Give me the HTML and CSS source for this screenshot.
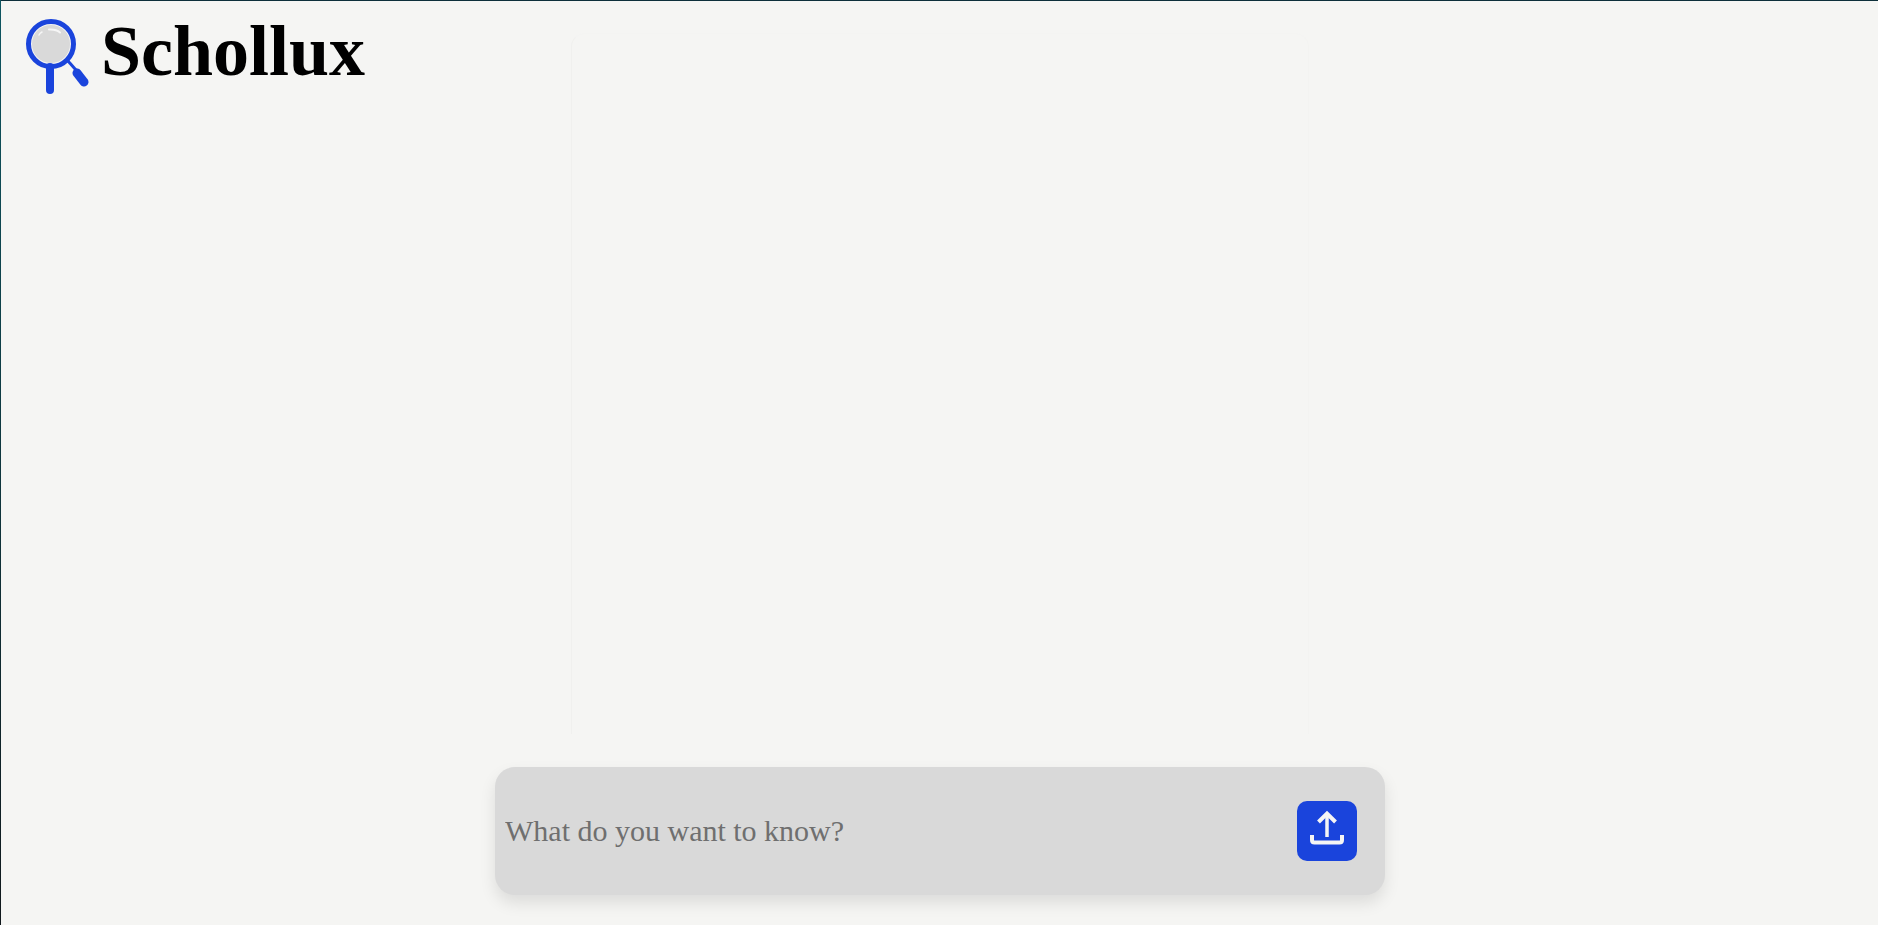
FILE: index.html
```html
<!DOCTYPE html>
<html lang="en">
<head>
<meta charset="UTF-8">
<title>Schollux</title>
<link rel="stylesheet" href="styles.css">
</head>
<body>
<div class="app">
  <header class="marca">
    <svg class="lupa" width="66" height="78" viewBox="0 0 66 78">
      <circle cx="27" cy="27" r="19.500" fill="#d9d9d9" stroke="#f4f4f4" stroke-width="1"/>
      <circle cx="27" cy="27" r="22.500" fill="none" stroke="#1a44dc" stroke-width="5"/>
      <path d="M25 12.500q7-.5 11 3" fill="none" stroke="#f6f6f6" stroke-width="2" stroke-linecap="round"/>
      <path d="M15 18q1-2 3-3" fill="none" stroke="#f6f6f6" stroke-width="1.500" stroke-linecap="round"/>
      <path d="M26 50v23" stroke="#1a44dc" stroke-width="8" stroke-linecap="round"/>
      <path d="M44 44l8 9" stroke="#1a44dc" stroke-width="3"/>
      <path d="M53 56l7 9" stroke="#1a44dc" stroke-width="9" stroke-linecap="round"/>
    </svg>
    <h1 class="nombre">Schollux</h1>
  </header>

  <main class="panel"></main>

  <form class="buscador">
    <input class="campo" type="text" placeholder="What do you want to know?">
    <button class="enviar" type="button" aria-label="Send">
      <svg width="60" height="60" viewBox="0 0 60 60" fill="none" stroke="#f5f5f5" stroke-width="4">
        <path d="M30 13v23" stroke-width="3.500"/>
        <path d="M21.500 21 30 12.500l8.500 8.500"/>
        <path d="M15 34v5q0 2.500 2.500 2.500h25q2.500 0 2.500-2.500v-5"/>
      </svg>
    </button>
  </form>
</div>
</body>
</html>
```

FILE: styles.css
```css
html,body{height:100%;}
body{margin:0;font-family:"Liberation Serif","Times New Roman",serif;overflow:hidden;
     background:linear-gradient(#0d5560,#10181c) 0 0/1px 100% no-repeat,
                linear-gradient(#0d2f3a,#0d2f3a) 0 0/100% 1px no-repeat,#f5f5f3;}

.app{height:925px;box-sizing:border-box;padding:1px 0 0 1px;
     display:flex;flex-direction:column;position:relative;}

/* ----- logo ----- */
.marca{position:absolute;top:17px;left:24px;display:flex;align-items:flex-start;}
.lupa{display:block;}
.nombre{margin:-2px 0 0 11px;font-size:72px;line-height:72px;font-weight:bold;color:#000;}

/* ----- area de respuesta ----- */
.panel{margin:32px 0 0 570px;width:738px;height:701px;box-sizing:border-box;
       border:1px solid #f0f0ee;border-top-color:#f4f4f2;border-right-color:#f3f3f1;border-bottom:none;
       border-radius:14px 14px 0 0;}

/* ----- caja de pregunta ----- */
.buscador{margin:33px 0 0 494px;width:890px;height:128px;box-sizing:border-box;padding:0 28px 0 10px;
          display:flex;align-items:center;background:#d9d9d9;border-radius:20px;
          box-shadow:0 8px 16px rgba(0,0,0,.1);}
.campo{flex:1;min-width:0;border:none;outline:none;background:transparent;padding:0;
       font-family:inherit;font-size:30px;color:#333;}
.campo::placeholder{color:#6f6f6f;opacity:1;}
.enviar{width:60px;height:60px;padding:0;border:none;border-radius:10px;background:#1a44dc;}
.enviar svg{display:block;}
```
